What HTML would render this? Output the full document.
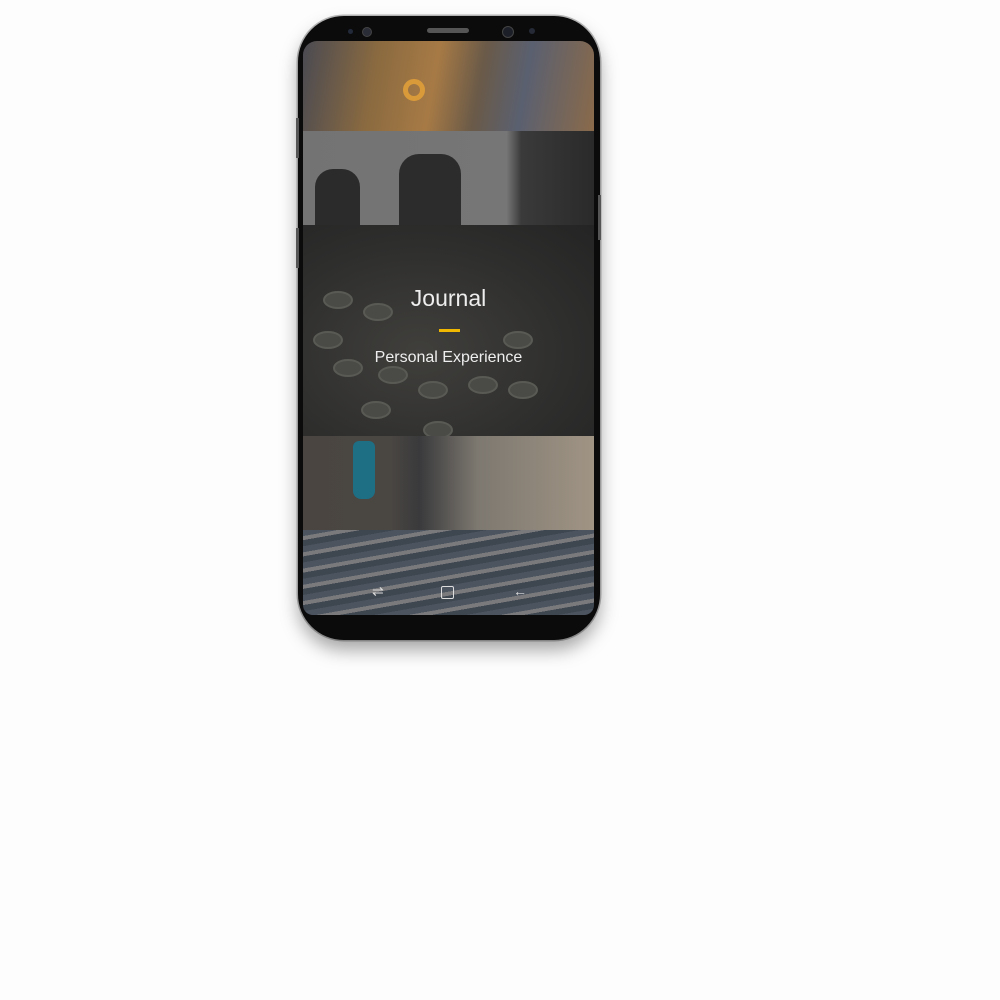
<!DOCTYPE html>
<html><head><style>
body{margin:0;width:1000px;height:1000px;background:#fdfdfd;position:relative;overflow:hidden;font-family:"Liberation Sans",sans-serif}
.phone{position:absolute;left:298px;top:16px;width:302px;height:624px;border-radius:46px;background:#0b0b0c;box-shadow:0 10px 18px rgba(0,0,0,.35),0 0 0 1.5px #bbb}
.screen{position:absolute;left:303px;top:41px;width:291px;height:574px;overflow:hidden;border-radius:14px 14px 10px 10px}
.b{position:absolute;left:0;width:100%}
.txt{position:absolute;width:100%;text-align:center;color:#eee}
.k{position:absolute;width:26px;height:14px;border-radius:50%;background:#4a4a46;border:2px solid #5a5a55}
</style></head><body>
<div class="phone"></div>
<div style="position:absolute;left:296px;top:118px;width:3px;height:40px;background:#555"></div>
<div style="position:absolute;left:296px;top:228px;width:3px;height:40px;background:#555"></div>
<div style="position:absolute;left:598px;top:195px;width:3px;height:45px;background:#555"></div>
<div style="position:absolute;left:427px;top:28px;width:42px;height:5px;border-radius:3px;background:#555"></div>
<div style="position:absolute;left:362px;top:27px;width:8px;height:8px;border-radius:50%;background:#2a2d36;border:1px solid #444"></div>
<div style="position:absolute;left:348px;top:29px;width:5px;height:5px;border-radius:50%;background:#222a3a"></div>
<div style="position:absolute;left:502px;top:26px;width:10px;height:10px;border-radius:50%;background:#1c1f28;border:1px solid #444"></div>
<div style="position:absolute;left:529px;top:28px;width:6px;height:6px;border-radius:50%;background:#252a36"></div>
<div class="screen">
 <div class="b" style="top:0;height:90px;background:linear-gradient(100deg,#4a4a52 0%,#8a6a40 25%,#a77a45 45%,#6a5a48 60%,#5a6070 75%,#8a6a4a 100%)"></div>
 <div style="position:absolute;left:100px;top:38px;width:22px;height:22px;border-radius:50%;border:5px solid #d99a3a;box-sizing:border-box"></div>
 <div class="b" style="top:90px;height:94px;background:linear-gradient(90deg,#737373 0%,#767676 70%,#3a3a3a 75%,#2a2a2a 100%)"></div>
 <div style="position:absolute;left:12px;top:128px;width:45px;height:56px;background:#2b2b2b;border-radius:18px 18px 0 0"></div>
 <div style="position:absolute;left:96px;top:113px;width:62px;height:71px;background:#2c2c2c;border-radius:20px 20px 0 0"></div>
 <div class="b" style="top:184px;height:211px;background:radial-gradient(ellipse at 40% 60%,#403f3c 0%,#2e2e2d 60%,#242424 100%)"></div>
 <div class="k" style="left:20px;top:250px"></div><div class="k" style="left:60px;top:262px"></div><div class="k" style="left:10px;top:290px"></div>
 <div class="k" style="left:30px;top:318px"></div><div class="k" style="left:75px;top:325px"></div><div class="k" style="left:115px;top:340px"></div>
 <div class="k" style="left:165px;top:335px"></div><div class="k" style="left:120px;top:380px"></div><div class="k" style="left:58px;top:360px"></div>
 <div class="k" style="left:200px;top:290px"></div><div class="k" style="left:205px;top:340px"></div>
 <div class="b" style="top:395px;height:94px;background:linear-gradient(90deg,#4a4540 0%,#4a4642 30%,#3a3a3c 40%,#7d7870 60%,#a09484 100%)"></div>
 <div style="position:absolute;left:50px;top:400px;width:22px;height:58px;background:#1e6e84;border-radius:6px 6px 8px 8px"></div>
 <div class="b" style="top:489px;height:85px;background:repeating-linear-gradient(170deg,#4c5460 0 6px,#7a7a7c 6px 10px,#3e4650 10px 16px)"></div>
 <div class="txt" style="top:244px;font-size:23px">Journal</div>
 <div style="position:absolute;left:136px;top:288px;width:21px;height:3px;background:#f0b800"></div>
 <div class="txt" style="top:308px;font-size:16px">Personal Experience</div>
 <div class="txt" style="top:542px;font-size:14px;color:#ddd"><span style="position:absolute;left:69px">⇌</span><span style="position:absolute;left:138px;top:3px;width:11px;height:11px;border:1.5px solid #ddd;border-radius:2px"></span><span style="position:absolute;left:210px">←</span></div>
</div>
</body></html>
